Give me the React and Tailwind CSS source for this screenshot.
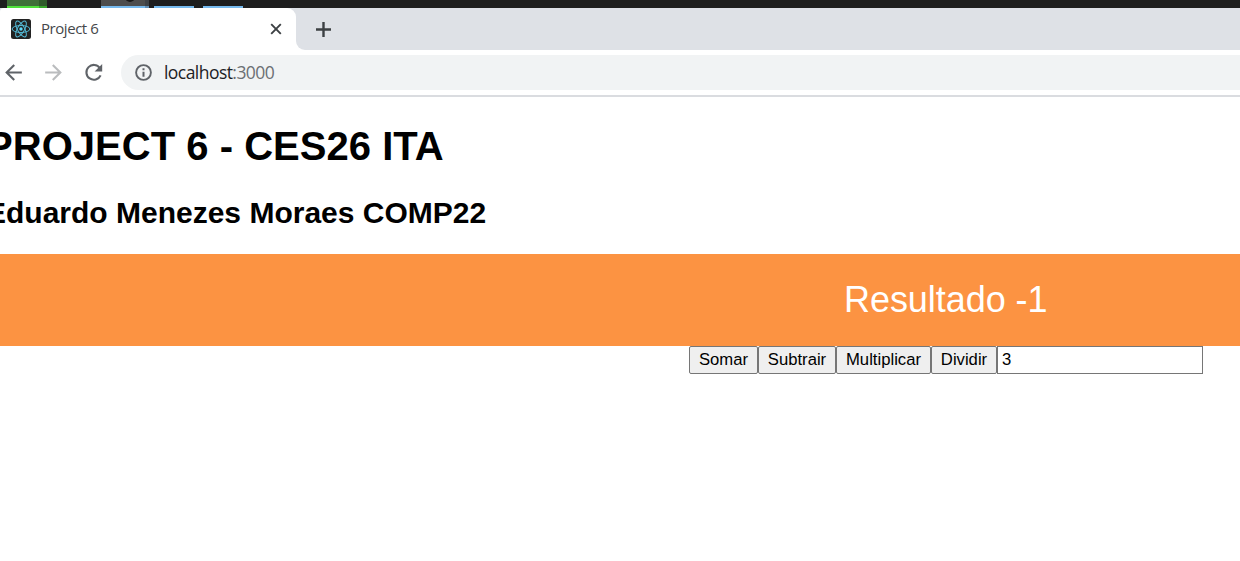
import { MdArrowBack, MdArrowForward } from "react-icons/md";

function ReactLogo() {
  return (
    <svg className="size-5 shrink-0" viewBox="0 0 20 20">
      <rect width="20" height="20" rx="2.5" fill="#222222" />
      <g fill="none" stroke="#53b9d5" strokeWidth="1">
        <ellipse cx="10" cy="10" rx="8.9" ry="3.5" />
        <ellipse cx="10" cy="10" rx="8.9" ry="3.5" transform="rotate(60 10 10)" />
        <ellipse cx="10" cy="10" rx="8.9" ry="3.5" transform="rotate(120 10 10)" />
      </g>
      <circle cx="10" cy="10" r="1.7" fill="#61dafb" />
    </svg>
  );
}

function ReloadIcon() {
  return (
    <svg className="size-[25px]" viewBox="0 0 25 25">
      <path d="M18.9 8.1A7.4 7.4 0 1 0 19.6 15.3" fill="none" stroke="#5f6368" strokeWidth="2.1" />
      <path d="M21.2 4v7.6h-7.6z" fill="#5f6368" />
    </svg>
  );
}

function InfoIcon() {
  return (
    <svg className="size-[21px]" viewBox="0 0 21 21">
      <circle cx="10.5" cy="10.5" r="7.4" fill="none" stroke="#5f6368" strokeWidth="1.9" />
      <path d="M10.5 9.7v5M10.5 6.2v2.1" stroke="#5f6368" strokeWidth="2" />
    </svg>
  );
}

function Taskbar() {
  return (
    <div className="flex h-2 bg-[#1e1e1e] pl-[7px]">
      <div className="h-2 w-8 border-b-2 border-[#4fe03a] bg-[#3f6f38]" />
      <div className="mr-[54px] h-2 w-2 border-b-2 border-[#37a52b] bg-[#2f5b2a]" />
      <div className="relative h-2 w-11 overflow-hidden border-b-2 border-[#76b9ed] bg-[#4d4d4d]">
        <div className="absolute top-[-8px] left-[24px] size-[10px] rounded-full bg-[#191919]" />
      </div>
      <div className="mr-[5px] h-2 w-1 border-b-2 border-[#628fb5] bg-[#3d4145]" />
      <div className="mr-[9px] h-2 w-10 border-b-2 border-[#76b9ed]" />
      <div className="h-2 w-10 border-b-2 border-[#76b9ed]" />
    </div>
  );
}

function TabStrip() {
  return (
    <div className="flex h-[42px] bg-white">
      <div className="flex w-[296px] shrink-0 bg-[#dee1e6]">
        <div className="flex w-full items-center rounded-tr-[9px] rounded-tl-[4px] bg-white pr-[14px] pl-[11px]">
          <ReactLogo />
          <span className="mb-[2px] ml-[10px] flex-1 font-['Open_Sans',sans-serif] text-[15px] leading-5 tracking-[-0.45px] text-[#45474a]">
            Project 6
          </span>
          <svg className="size-3" viewBox="0 0 12 12">
            <path d="M1.2 1.2l9.6 9.6M10.8 1.2L1.2 10.8" stroke="#3c4043" strokeWidth="1.9" />
          </svg>
        </div>
      </div>
      <div className="flex flex-1 items-center rounded-bl-[9px] bg-[#dee1e6] pl-5">
        <svg className="size-[15px]" viewBox="0 0 15 15">
          <path d="M7.5 0v15M0 7.5h15" stroke="#3c4043" strokeWidth="2.4" />
        </svg>
      </div>
    </div>
  );
}

function Toolbar() {
  return (
    <div className="flex h-[47px] items-start border-b-2 border-[#dadce0] bg-white pt-[5px] pl-[1px]">
      <div className="flex h-[35px] w-[120px] shrink-0 items-center gap-[15px]">
        <MdArrowBack className="size-[25px] text-[#5f6368]" />
        <MdArrowForward className="size-[25px] text-[#babcbe]" />
        <ReloadIcon />
      </div>
      <div className="flex h-[35px] flex-1 items-center rounded-l-full bg-[#f1f3f4] pl-[12px]">
        <InfoIcon />
        <span className="mb-[2px] ml-[10px] font-['Open_Sans',sans-serif] text-[17.5px] leading-6 tracking-[-0.55px] text-[#202124]">
          localhost<span className="text-[#6b6f73]">:3000</span>
        </span>
      </div>
    </div>
  );
}

const buttonClass =
  "h-7 shrink-0 rounded-[2px] border border-[#767676] bg-[#efefef] text-center text-[16.67px] leading-none text-black";

export default function App() {
  return (
    <div className="h-[561px] w-[1240px] overflow-hidden bg-white font-['Liberation_Sans',Arial,sans-serif] text-black">
      <Taskbar />
      <TabStrip />
      <Toolbar />
      <main>
        <h1 className="mt-[26px] ml-[-14px] text-[40px] leading-[46px] font-bold tracking-[0.03px] whitespace-nowrap">
          PROJECT 6 - CES26 ITA
        </h1>
        <h2 className="mt-[27px] ml-[-14px] text-[30px] leading-[34px] font-bold whitespace-nowrap">
          Eduardo Menezes Moraes COMP22
        </h2>
        <div className="mt-6 flex h-[92px] items-center bg-[#fc9342] pl-[844px] text-[36px] text-white">
          <span className="tracking-[-0.05px] whitespace-nowrap">Resultado -1</span>
        </div>
        <div className="flex pl-[689px]">
          <button className={`${buttonClass} w-[69px]`}>Somar</button>
          <button className={`${buttonClass} w-[78px]`}>Subtrair</button>
          <button className={`${buttonClass} w-[95px]`}>Multiplicar</button>
          <button className={`${buttonClass} w-[66px]`}>Dividir</button>
          <input
            className="h-7 w-[206px] border border-[#767676] bg-white px-1 text-[16.67px] leading-none text-black"
            defaultValue="3"
          />
        </div>
      </main>
    </div>
  );
}
